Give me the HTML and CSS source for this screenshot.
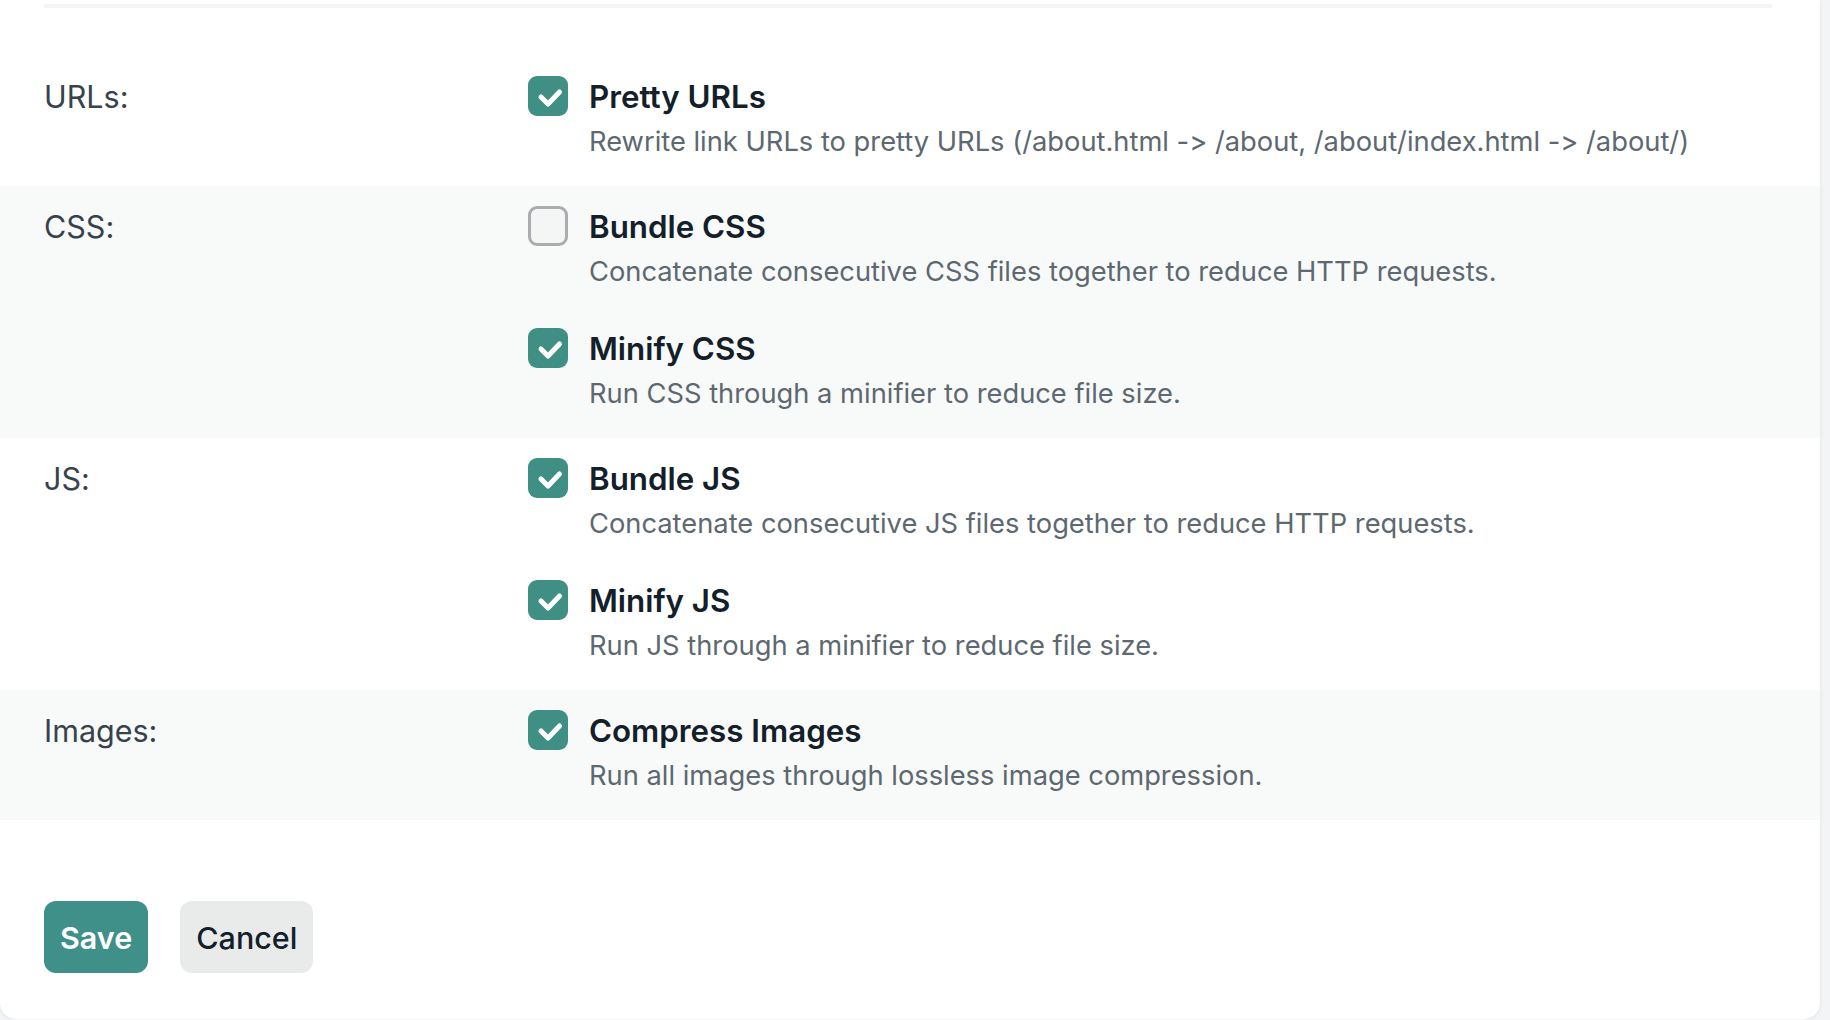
FILE: index.html
```html
<!DOCTYPE html>
<html lang="en">
<head>
    <meta charset="UTF-8">
    <meta name="viewport" content="width=device-width, initial-scale=1.0">
    <title>Optimization Settings</title>
    <link rel="stylesheet" href="styles.css">
</head>
<body>
    <div class="card">
        <div class="divider"></div>

        <div class="settings">
            <div class="row">
                <div class="label">URLs:</div>
                <div class="options">
                    <label class="option">
                        <span class="box checked"><svg viewBox="0 0 40 40"><path d="M13 21 L20 28 L31.5 16"/></svg></span>
                        <span class="title">Pretty URLs</span>
                        <span class="desc">Rewrite link URLs to pretty URLs (/about.html -&gt; /about, /about/index.html -&gt; /about/)</span>
                    </label>
                </div>
            </div>

            <div class="row shaded">
                <div class="label">CSS:</div>
                <div class="options">
                    <label class="option">
                        <span class="box"></span>
                        <span class="title">Bundle CSS</span>
                        <span class="desc">Concatenate consecutive CSS files together to reduce HTTP requests.</span>
                    </label>
                    <label class="option">
                        <span class="box checked"><svg viewBox="0 0 40 40"><path d="M13 21 L20 28 L31.5 16"/></svg></span>
                        <span class="title">Minify CSS</span>
                        <span class="desc">Run CSS through a minifier to reduce file size.</span>
                    </label>
                </div>
            </div>

            <div class="row">
                <div class="label">JS:</div>
                <div class="options">
                    <label class="option">
                        <span class="box checked"><svg viewBox="0 0 40 40"><path d="M13 21 L20 28 L31.5 16"/></svg></span>
                        <span class="title">Bundle JS</span>
                        <span class="desc">Concatenate consecutive JS files together to reduce HTTP requests.</span>
                    </label>
                    <label class="option">
                        <span class="box checked"><svg viewBox="0 0 40 40"><path d="M13 21 L20 28 L31.5 16"/></svg></span>
                        <span class="title">Minify JS</span>
                        <span class="desc">Run JS through a minifier to reduce file size.</span>
                    </label>
                </div>
            </div>

            <div class="row shaded">
                <div class="label">Images:</div>
                <div class="options">
                    <label class="option">
                        <span class="box checked"><svg viewBox="0 0 40 40"><path d="M13 21 L20 28 L31.5 16"/></svg></span>
                        <span class="title">Compress Images</span>
                        <span class="desc">Run all images through lossless image compression.</span>
                    </label>
                </div>
            </div>
        </div>

        <div class="actions">
            <button class="btn btn-primary">Save</button>
            <button class="btn btn-secondary">Cancel</button>
        </div>
    </div>
</body>
</html>
```

FILE: styles.css
```css
body {
    margin: 0;
    background-color: #f2f4f5;
    font-family: Inter, "Noto Sans", sans-serif;
    font-feature-settings: "calt" 0;
    color: #13202a;
}
.card {
    width: 1820px;
    background-color: #ffffff;
    border-radius: 0 0 16px 16px;
    box-shadow: 0 1px 4px rgba(0, 0, 0, 0.08);
    padding-top: 4px;
    padding-bottom: 46px;
}
.divider {
    height: 4px;
    margin: 0 48px 0 44px;
    background-color: #f3f4f4;
}
.settings {
    margin-top: 48px;
}
.row {
    display: grid;
    grid-template-columns: 484px 1fr;
    padding: 20px 48px 24px 44px;
}
.row.shaded {
    background-color: #f8fafa;
}
.label {
    font-size: 30.5px;
    line-height: 42px;
    color: #36434c;
}
.options {
    display: flex;
    flex-direction: column;
    gap: 36px;
}
.option {
    display: grid;
    grid-template-columns: 40px 1fr;
    column-gap: 21px;
    cursor: pointer;
}
.box {
    grid-row: 1;
    width: 40px;
    height: 40px;
    box-sizing: border-box;
    border: 3px solid #a9adb0;
    border-radius: 9px;
    background-color: #f4f5f5;
}
.box.checked {
    border: none;
    background-color: #3f8f84;
}
.box svg {
    display: block;
    width: 40px;
    height: 40px;
}
.box path {
    fill: none;
    stroke: #ffffff;
    stroke-width: 5;
    stroke-linecap: round;
    stroke-linejoin: round;
}
.title {
    grid-column: 2;
    grid-row: 1;
    font-size: 31.3px;
    font-weight: 600;
    line-height: 42px;
    color: #13202a;
}
.desc {
    grid-column: 2;
    grid-row: 2;
    margin-top: 4px;
    font-size: 27.3px;
    line-height: 40px;
    color: #5d6870;
}
.actions {
    display: flex;
    gap: 32px;
    margin-top: 81px;
    padding-left: 44px;
}
.btn {
    height: 72px;
    padding: 0 16px;
    border: none;
    border-radius: 12px;
    font-family: Inter, "Noto Sans", sans-serif;
    font-size: 30.5px;
    cursor: pointer;
}
.btn-primary {
    background-color: #40908a;
    color: #ffffff;
    font-weight: 600;
}
.btn-secondary {
    background-color: #e9ebeb;
    color: #13202a;
    font-weight: 500;
}
```
